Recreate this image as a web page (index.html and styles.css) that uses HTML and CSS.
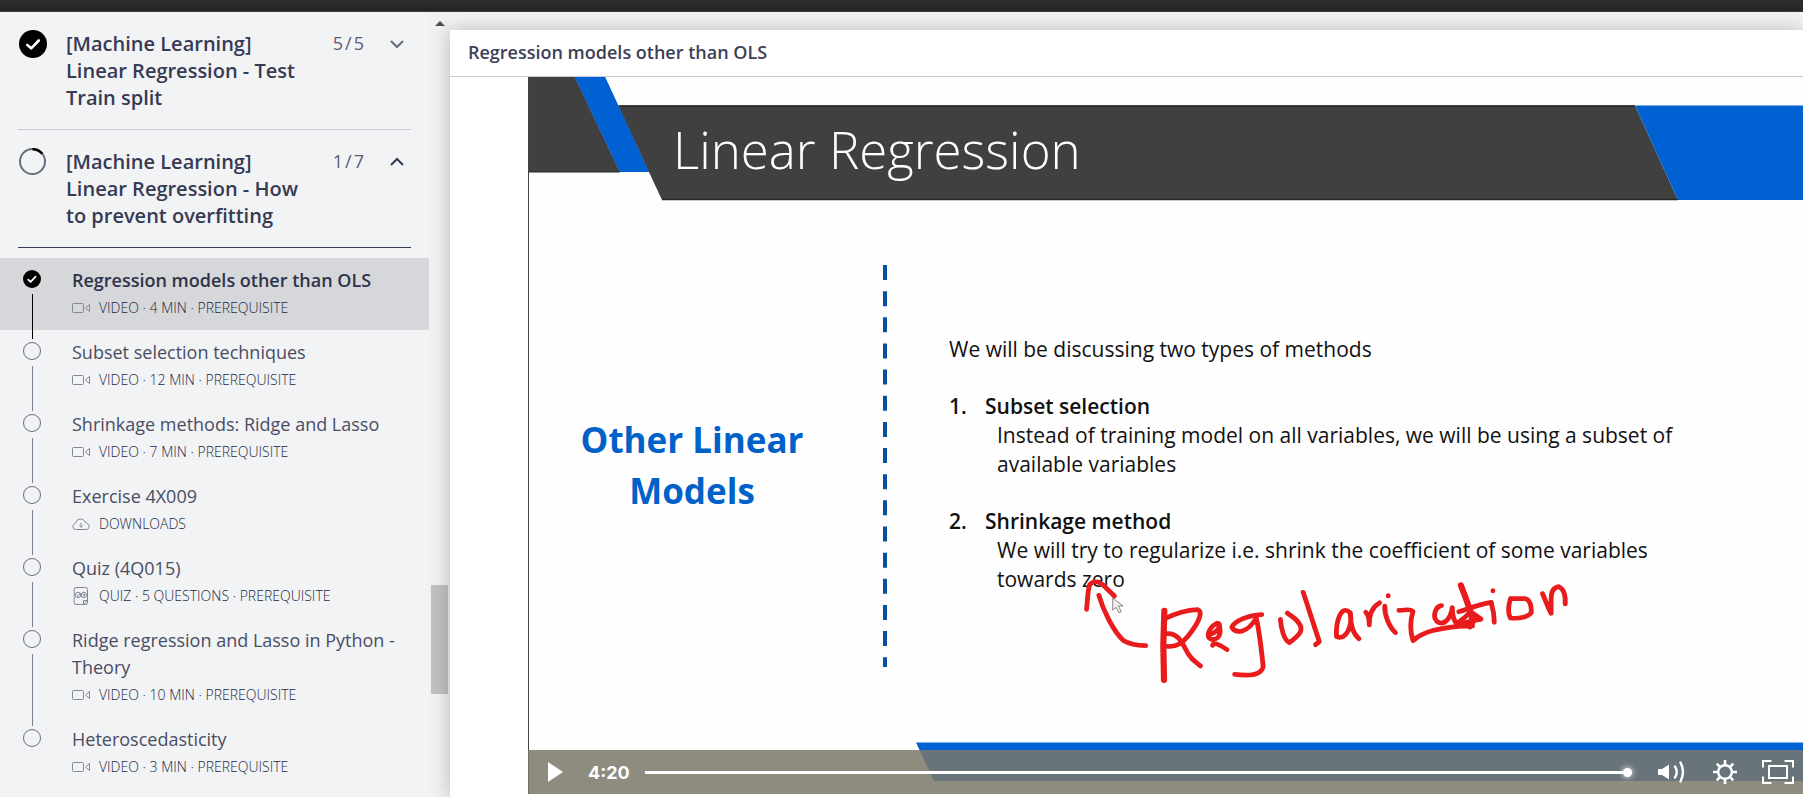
FILE: index.html
```html
<!DOCTYPE html>
<html lang="en">
<head>
<meta charset="utf-8">
<title>Regression models other than OLS</title>
<link rel="stylesheet" href="styles.css">
</head>
<body>
<svg class="sprite" aria-hidden="true">
  <symbol id="video" viewBox="0 0 18 18"><rect x=".5" y="4.500" width="11" height="9" rx="1"/><path d="M13.500 9 17.500 5.500V12.500Z"/></symbol>
  <symbol id="cloud" viewBox="0 0 18 18"><path d="M3.500 14.500H14.500A3 3 0 0 0 15 8.600 A2.800 2.800 0 0 0 12.800 6.800 A4.600 4.600 0 0 0 4 7.600 A3 3 0 0 0 2.600 8.800 A3 3 0 0 0 3.500 14.500Z M9 8V12.200M7.300 10.600 9 12.300 10.700 10.600"/></symbol>
  <symbol id="quiz" viewBox="0 0 18 18"><path d="M15.500 13.500V2.500A1.800 1.800 0 0 0 13.700.5H4A1.800 1.800 0 0 0 2.200 2.500V15.500A1.800 1.800 0 0 0 4 17.500H11.500L15.500 13.500H11.500V17.500H13.700A1.800 1.800 0 0 0 15.500 15.500V13"/><circle cx="6" cy="8" r="2.700"/><circle cx="11.800" cy="8" r="2.700"/><path d="M4.600 8 5.800 9.200 8.600 6M10.600 6.800 13 9.200M13 6.800 10.600 9.200"/></symbol>
</svg>
<header class="topbar"></header>
<div class="app">
  <aside class="sidebar">
    <nav class="course" aria-label="Course contents">
      <button class="chapter" type="button" aria-expanded="false">
        <svg class="badge" viewBox="0 0 28 28"><circle cx="14" cy="14" r="14" fill="#000"/><path d="M8.3 15 12.2 18.3 19.8 10.5" fill="none" stroke="#fff" stroke-width="2.6" stroke-linecap="round" stroke-linejoin="round"/></svg>
        <span class="chapter-name">[Machine Learning] Linear Regression - Test Train split</span>
        <span class="count"><span>5</span><span>/</span><span>5</span></span>
        <svg class="chevron" viewBox="0 0 14 14"><path d="M1 4 7 10 13 4"/></svg>
      </button>
      <button class="chapter open" type="button" aria-expanded="true">
        <svg class="badge" viewBox="0 0 28 28"><circle cx="13.5" cy="13.5" r="12.5" fill="none" stroke="#696c80" stroke-width="2"/><path d="M13.5 1.2A12.5 12.5 0 0 1 23.2 5.8" fill="none" stroke="#000" stroke-width="2.6"/></svg>
        <span class="chapter-name">[Machine Learning] Linear Regression - How to prevent overfitting</span>
        <span class="count"><span>1</span><span>/</span><span>7</span></span>
        <svg class="chevron" viewBox="0 0 14 14"><path d="M1 10 7 4 13 10"/></svg>
      </button>
      <ul class="lessons">
        <li><a class="lesson current" href="#l1" aria-current="page"><span class="rail"><svg class="dot" viewBox="0 0 18 18"><circle cx="9" cy="9" r="9" fill="#000"/><path d="M5.2 9.6 7.6 11.8 12.6 6.6" fill="none" stroke="#fff" stroke-width="1.8" stroke-linecap="round" stroke-linejoin="round"/></svg><i class="line"></i></span><span class="info"><span class="name">Regression models other than OLS</span><span class="meta"><svg class="icon"><use href="#video"/></svg>VIDEO · 4 MIN · PREREQUISITE</span></span></a></li>
        <li><a class="lesson" href="#l2"><span class="rail"><i class="dot ring"></i><i class="line"></i></span><span class="info"><span class="name">Subset selection techniques</span><span class="meta"><svg class="icon"><use href="#video"/></svg>VIDEO · 12 MIN · PREREQUISITE</span></span></a></li>
        <li><a class="lesson" href="#l3"><span class="rail"><i class="dot ring"></i><i class="line"></i></span><span class="info"><span class="name">Shrinkage methods: Ridge and Lasso</span><span class="meta"><svg class="icon"><use href="#video"/></svg>VIDEO · 7 MIN · PREREQUISITE</span></span></a></li>
        <li><a class="lesson" href="#l4"><span class="rail"><i class="dot ring"></i><i class="line"></i></span><span class="info"><span class="name">Exercise 4X009</span><span class="meta"><svg class="icon"><use href="#cloud"/></svg>DOWNLOADS</span></span></a></li>
        <li><a class="lesson" href="#l5"><span class="rail"><i class="dot ring"></i><i class="line"></i></span><span class="info"><span class="name">Quiz (4Q015)</span><span class="meta"><svg class="icon"><use href="#quiz"/></svg>QUIZ · 5 QUESTIONS · PREREQUISITE</span></span></a></li>
        <li><a class="lesson" href="#l6"><span class="rail"><i class="dot ring"></i><i class="line"></i></span><span class="info"><span class="name">Ridge regression and Lasso in Python - Theory</span><span class="meta"><svg class="icon"><use href="#video"/></svg>VIDEO · 10 MIN · PREREQUISITE</span></span></a></li>
        <li><a class="lesson" href="#l7"><span class="rail"><i class="dot ring"></i></span><span class="info"><span class="name">Heteroscedasticity</span><span class="meta"><svg class="icon"><use href="#video"/></svg>VIDEO · 3 MIN · PREREQUISITE</span></span></a></li>
      </ul>
    </nav>
    <div class="scrollbar" aria-hidden="true"><i class="arrow"></i><i class="before"></i><i class="thumb"></i><i class="after"></i></div>
  </aside>
  <main class="content">
    <h1 class="lesson-title">Regression models other than OLS</h1>
    <section class="player" aria-label="Video player">
      <div class="slide">
        <svg class="art" viewBox="0 0 1275 717" preserveAspectRatio="xMinYMin slice" aria-hidden="true">
          <path d="M0 0H47L92 95H0Z" fill="#404040"/><path d="M0 95H92" stroke="#222" stroke-width="1"/>
          <path d="M47 0H77L121 95H92Z" fill="#0061d3"/>
          <path d="M90 28.500H1107L1150 123H134Z" fill="#404040"/>
          <path d="M47 0H77L121 95H92Z" fill="#0061d3"/>
          <path d="M91 29H1107M134 122.500H1150" stroke="#262626" stroke-width="1.500"/>
          <path d="M1107 28.500H1275V123H1150Z" fill="#0061d3"/>
          <path d="M357 188V590" stroke="#08509f" stroke-width="4" stroke-dasharray="15 11.150"/>
          <path d="M388 665.500H1275V704H406Z" fill="#0061d3"/>
          <path d="M.5 0V717" stroke="#444"/>
        </svg>
        <h2 class="slide-title">Linear Regression</h2>
        <div class="columns">
          <h3 class="topic">Other Linear Models</h3>
          <div class="copy">
            <p>We will be discussing two types of methods</p>
            <div class="point"><b>1.</b><b>Subset selection</b><p>Instead of training model on all variables, we will be using a subset of available variables</p></div>
            <div class="point"><b>2.</b><b>Shrinkage method</b><p>We will try to regularize i.e. shrink the coefficient of some variables towards zero</p></div>
          </div>
        </div>
        <svg class="art" viewBox="0 0 1275 717" preserveAspectRatio="xMinYMin slice" role="img" aria-label="Handwritten note: Regularization">
          <g transform="translate(532 483) scale(.3444 .3333)">
            <path d="M153 114V150L163 142 171 158 178 155 170 138H183Z" fill="#eee" stroke="#555" stroke-width="2"/>
            <g fill="none" stroke="#e81c1c" stroke-width="14" stroke-linecap="round" stroke-linejoin="round">
              <path d="M77 148C80 125 80 95 86 74C100 58 118 66 132 82L158 108"/>
              <path d="M113 106C125 150 155 215 185 242C205 254 225 256 249 257"/>
              <path stroke-width="18" d="M303 152C300 210 299 290 302 360"/>
              <path d="M303 177C335 160 365 150 400 149C417 156 402 190 372 228C355 250 335 262 312 259M312 221C345 220 355 250 373 283C385 303 397 308 408 318"/>
              <path d="M431 224C460 220 475 185 453 191C430 205 422 235 440 238C470 242 470 200 456 190M443 256C447 246 460 252 485 269"/>
              <path d="M586 164C545 165 505 185 499 202C510 222 545 220 570 174C580 220 585 270 590 320C585 345 555 349 507 343"/>
              <path d="M640 178C642 205 650 240 666 248C690 230 710 212 695 192C685 172 672 170 660 159"/>
              <path d="M706 97C722 145 738 200 753 245L742 254"/>
              <path d="M842 158C815 130 800 190 803 230C830 242 850 200 843 158C843 190 850 220 868 236"/>
              <path d="M888 157C900 170 897 185 898 195C897 160 908 140 928 128"/>
              <path d="M943 138C942 165 955 200 974 218M953 107V108"/>
              <path d="M984 151C1000 152 1015 144 1025 154C1017 180 1017 215 1025 242C1060 210 1110 205 1155 199L1198 198"/>
              <path d="M1108 137C1088 140 1082 170 1094 184C1115 200 1135 175 1139 143C1140 180 1150 198 1165 190L1222 178"/>
              <path stroke-width="18" d="M1164 76C1178 115 1195 155 1198 185L1190 199"/>
              <path d="M1158 155C1180 150 1205 135 1252 127M1150 190C1170 180 1180 168 1192 155L1222 177"/>
              <path d="M1252 128C1257 145 1261 165 1261 187M1257 92V93"/>
              <path d="M1308 116C1301 140 1300 160 1308 174C1335 177 1360 170 1368 159C1370 140 1365 118 1350 116H1308"/>
              <path d="M1401 101C1410 120 1417 145 1426 160C1427 115 1420 85 1448 80C1466 88 1468 110 1467 132"/>
            </g>
          </g>
        </svg>
      </div>
      <div class="controls">
        <button type="button" aria-label="Play"><svg class="play" viewBox="0 0 15 20"><path d="M0 0 15 10 0 20Z" fill="#fff"/></svg></button>
        <span class="time">4:20</span>
        <input class="seek" type="range" min="0" max="100" value="100" aria-label="Seek">
        <button type="button" aria-label="Volume"><svg class="volume" viewBox="0 0 28 24"><path d="M0 10Q0 9 1 9H4L11 4.500V19.500L4 15H1Q0 15 0 14Z" fill="#fff"/><path d="M17 6.500Q20.500 12 17 17.500M22.500 2.500Q27.500 12 22.500 21.500" fill="none" stroke="#fff" stroke-width="2.400" stroke-linecap="round"/></svg></button>
        <button type="button" aria-label="Settings"><svg class="gear" viewBox="-12 -12 24 24"><g fill="none" stroke="#fff"><circle r="6.800" stroke-width="2.400"/><path stroke-width="2.600" d="M0-7V-12M0 7V12M-7 0H-12M7 0H12M5-5 8.300-8.300M-5 5-8.300 8.300M5 5 8.300 8.300M-5-5-8.300-8.300"/></g></svg></button>
        <button type="button" aria-label="Full screen"><svg class="full" viewBox="0 0 32 24"><path d="M1 7.500V1H9.500M22.500 1H31V7.500M31 16.500V23H22.500M9.500 23H1V16.500M7 6H25V18H7Z" fill="none" stroke="#fff" stroke-width="2"/></svg></button>
      </div>
    </section>
  </main>
</div>
</body>
</html>
```
FILE: styles.css
```css
* { box-sizing: border-box; }
body {
  margin: 0;
  height: 100vh;
  display: flex;
  flex-direction: column;
  overflow: hidden;
  background: #f1f3f5;
  color: #373a53;
  font-family: "Open Sans", "Noto Sans", sans-serif;
  font-size: 18px;
  line-height: 27px;
}
button { font: inherit; color: inherit; background: none; border: 0; padding: 0; margin: 0; }
h1, h2, h3, p, ul { margin: 0; padding: 0; }
.sprite { position: absolute; width: 0; height: 0; }
.topbar { flex: none; height: 12px; background: linear-gradient(#2d2d2d, #242424); border-bottom: 1px solid #3c3c3c; }
.app { flex: 1; min-height: 0; display: flex; }

.sidebar { flex: none; width: 450px; display: flex; }
.course { flex: 1; min-width: 0; overflow: hidden; }
.chapter {
  display: flex;
  align-items: flex-start;
  width: calc(100% - 36px);
  margin: 0 18px;
  padding: 18px 7px 18px 0;
  border-bottom: 1px solid #c9cbd1;
  text-align: left;
}
.chapter.open { border-color: #373a53; }
.badge { flex: none; width: 28px; height: 28px; margin-left: 1px; }
.chapter-name { flex: none; width: 246px; margin-left: 19px; font-size: 20px; font-weight: 600; }
.count { display: flex; gap: 2px; margin-left: auto; margin-right: 26px; color: #5b5e72; }
.chevron { flex: none; width: 14px; height: 14px; margin-top: 7px; fill: none; stroke: #696c80; stroke-width: 2; }
.open .chevron { stroke: #373a53; }

.lessons { list-style: none; padding-top: 10px; }
.lesson { display: flex; gap: 31px; padding: 0 24px 0 23px; color: #4a4d64; text-decoration: none; }
.current { background: #d5d7da; color: #30334a; }
.rail { flex: none; width: 18px; display: flex; flex-direction: column; align-items: center; gap: 6px; padding-top: 12px; }
.dot { flex: none; width: 18px; height: 18px; }
.ring { border: 1px solid #696c80; border-radius: 50%; }
.line { flex: 1; width: 1px; margin-bottom: -9px; background: #7d8090; z-index: 1; }
.current .line { background: #000; }
.info { flex: 1; padding: 9px 0; display: flex; flex-direction: column; }
.current .name { font-weight: 600; }
.meta { display: flex; align-items: center; gap: 9px; font-size: 14px; font-weight: 300; color: #24273f; }
.icon { width: 18px; height: 18px; fill: none; stroke: #85889a; stroke-width: 1; }

.scrollbar { flex: none; width: 21px; padding: 9px 2px 0; display: flex; flex-direction: column; align-items: center; background: #f1f1f1; }
.arrow { border: 5px solid transparent; border-top: 0; border-bottom-color: #505050; }
.before { flex: 559; }
.thumb { flex: 109; width: 17px; background: #c1c1c1; }
.after { flex: 103; }

.content { flex: 1; min-width: 0; margin-top: 18px; background: #fff; box-shadow: 0 0 18px rgba(0, 0, 0, .24); position: relative; display: flex; flex-direction: column; }
.lesson-title { flex: none; padding: 9px 18px 10px; border-bottom: 1px solid #c6c9d8; font-size: 18px; font-weight: 600; color: #3c4056; }
.player { flex: 1; min-height: 0; margin: 0 0 3px 78px; display: grid; grid-template-rows: 1fr 44px; }
.slide { grid-area: 1 / 1 / 3 / 2; position: relative; overflow: hidden; background: #fefefe; color: #111; }
.art { position: absolute; inset: 0; width: 100%; height: 100%; }
.slide-title { position: relative; padding: 38px 0 0 145px; font-size: 51px; line-height: 68px; font-weight: 300; color: #fff; }
.columns { position: relative; display: grid; grid-template-columns: 328px 1fr; padding-top: 152px; }
.topic { justify-self: center; width: 240px; padding-top: 79px; text-align: center; font-size: 35px; line-height: 51px; font-weight: 700; color: #0061c8; }
.copy { padding-left: 93px; width: 830px; font-size: 21px; line-height: 29px; display: flex; flex-direction: column; gap: 28px; }
.point { display: grid; grid-template-columns: 36px 1fr; }
.point b { font-weight: 600; }
.point p { grid-column: 1 / 3; padding-left: 48px; }

.controls { grid-area: 2 / 1; position: relative; display: flex; align-items: center; padding: 0 9px 0 20px; background: rgba(122, 120, 105, .85); color: #fff; }
.controls button { flex: none; display: flex; }
.time { margin: 0 15px 0 25px; font-family: Inter, sans-serif; font-size: 18px; font-weight: 700; }
.seek { flex: 1; min-width: 0; height: 12px; margin: 0 26px 0 0; appearance: none; background: linear-gradient(#fff, #fff) center / 100% 3px no-repeat; }
.seek::-webkit-slider-thumb { appearance: none; width: 9px; height: 9px; border-radius: 50%; background: #fff; box-shadow: 0 0 6px #fff; }
.play { width: 15px; height: 20px; }
.volume { width: 28px; height: 24px; }
.gear { width: 24px; height: 24px; margin: 0 25px 0 27px; }
.full { width: 32px; height: 24px; }
```
